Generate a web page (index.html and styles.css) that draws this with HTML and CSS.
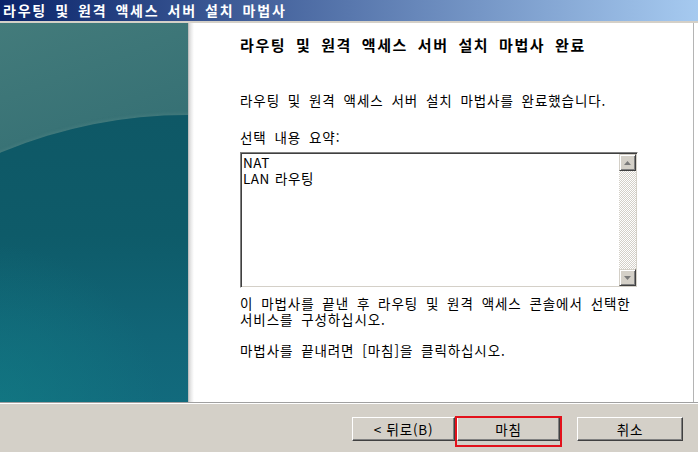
FILE: index.html
```html
<!DOCTYPE html>
<html lang="ko">
<head>
<meta charset="utf-8">
<title>라우팅 및 원격 액세스 서버 설치 마법사</title>
<link rel="stylesheet" href="styles.css">
</head>
<body>
<div class="window">
  <div class="titlebar">라우팅 및 원격 액세스 서버 설치 마법사</div>
  <div class="main">
    <div class="art"></div>
    <div class="shade"></div>
    <div class="content">
      <h1 class="heading">라우팅 및 원격 액세스 서버 설치 마법사 완료</h1>
      <p class="done">라우팅 및 원격 액세스 서버 설치 마법사를 완료했습니다.</p>
      <p class="label">선택 내용 요약:</p>
      <div class="summary">
        <div class="summary-text"><div class="item">NAT</div><div class="item">LAN 라우팅</div></div>
        <div class="scrollbar">
          <div class="sbtn"><svg width="7" height="4" viewBox="0 0 7 4"><path d="M3.5 0L7 4H0z" fill="#7a7a7a"/></svg></div>
          <div class="track"></div>
          <div class="sbtn"><svg width="7" height="4" viewBox="0 0 7 4"><path d="M0 0H7L3.5 4z" fill="#7a7a7a"/></svg></div>
        </div>
      </div>
      <p class="note">이 마법사를 끝낸 후 라우팅 및 원격 액세스 콘솔에서 선택한<br>서비스를 구성하십시오.</p>
      <p class="finish">마법사를 끝내려면 [마침]을 클릭하십시오.</p>
    </div>
    <div class="edge"></div>
  </div>
  <div class="footer">
    <button class="btn back">&lt; 뒤로(B)</button>
    <button class="btn default">마침</button>
    <button class="btn cancel">취소</button>
  </div>
</div>
</body>
</html>
```

FILE: styles.css
```css
* { box-sizing: border-box; }
html, body { margin: 0; padding: 0; }
body {
  background: #d4d0c8;
  font-family: "Noto Sans CJK KR", "Noto Sans", sans-serif;
  color: #000;
}
.window {
  width: 698px;
  height: 452px;
  overflow: hidden;
  display: flex;
  flex-direction: column;
}
.titlebar {
  height: 23px;
  line-height: 21px;
  padding-left: 3px;
  color: #fff;
  font-weight: bold;
  font-size: 14px;
  letter-spacing: 1.8px;
  word-spacing: 2.4px;
  background: linear-gradient(to right, #0a246a, #a6caf0) 0 0 / 100% 21px no-repeat, #d4d0c8;
  white-space: nowrap;
}
.main {
  height: 379px;
  display: flex;
  background: #fff;
}
.art {
  width: 188px;
  position: relative;
  overflow: hidden;
  background: linear-gradient(160deg, #437b7b 0%, #336e73 45%, #26666f 100%);
}
.art::before {
  content: "";
  position: absolute;
  left: -296px;
  top: 92px;
  width: 968px;
  height: 968px;
  border-radius: 50%;
  background:
    radial-gradient(circle 170px at 290px 300px, rgba(18, 128, 134, 0.55), rgba(18, 128, 134, 0) 100%),
    linear-gradient(to bottom, #0e5866 0, #0e5b69 120px, #116577 220px, #126b7e 300px);
  box-shadow: 0 -2px 3px rgba(90, 140, 140, 0.3);
}
.shade {
  width: 6px;
  background: linear-gradient(to right, #a8a8a8 0, #d4d4d4 1px, #e9e9e9 3px, #fff 6px);
}
.content {
  flex: 1;
  padding-left: 46px;
  font-size: 13.5px;
  line-height: 16px;
  letter-spacing: 0.9px;
  word-spacing: 3.2px;
  white-space: nowrap;
}
.edge {
  width: 5px;
  border-left: 1px solid #b4b4b4;
  background: #fff;
}
.heading {
  margin: 14px 0 0;
  font-size: 15px;
  line-height: 16px;
  font-weight: bold;
  letter-spacing: 1.6px;
  word-spacing: 4px;
}
.done { margin: 39px 0 0; }
.label { margin: 21px 0 0; }
.summary {
  margin-top: 7px;
  width: 398px;
  height: 136px;
  display: flex;
  padding: 1px;
  border: 1px solid;
  border-color: #808080 #fff #fff #808080;
  box-shadow: inset 1px 1px 0 #404040, inset -1px -1px 0 #d4d0c8;
  white-space: normal;
}
.summary-text {
  flex: 1;
  padding-left: 1px;
  font-size: 13.5px;
  letter-spacing: 0.5px;
  word-spacing: 1px;
}
.item {
  height: 16px;
  line-height: 16px;
}
.scrollbar {
  width: 17px;
  display: flex;
  flex-direction: column;
}
.sbtn {
  height: 17px;
  display: flex;
  align-items: center;
  justify-content: center;
  background: #d4d0c8;
  border: 1px solid;
  border-color: #d4d0c8 #404040 #404040 #d4d0c8;
  box-shadow: inset 1px 1px 0 #fff, inset -1px -1px 0 #808080;
}
.track {
  flex: 1;
  background: repeating-conic-gradient(#d4d0c8 0 25%, #fff 0 50%) 0 0 / 2px 2px;
}
.note { margin: 7px 0 0; }
.finish { margin: 15px 0 0; }
.footer {
  flex: 1;
  display: flex;
  align-items: flex-start;
  padding: 14px 0 0 352px;
  border-top: 1px solid #a0a0a0;
  box-shadow: inset 0 1px 0 #fff;
  background: #d4d0c8;
}
.btn {
  height: 24px;
  width: 103px;
  padding: 0;
  margin: 0;
  font-family: "Noto Sans CJK KR", "Noto Sans", sans-serif;
  font-size: 13.5px;
  letter-spacing: 0.8px;
  color: #000;
  background: #d4d0c8;
  border: 1px solid;
  border-color: #fff #404040 #404040 #fff;
  box-shadow: inset -1px -1px 0 #808080;
}
.default {
  margin-left: 2px;
  position: relative;
}
.default::after {
  content: "";
  position: absolute;
  left: -3px;
  right: -3px;
  top: -2px;
  bottom: -7px;
  border: 2px solid #e3111b;
}
.cancel {
  margin-left: 17px;
  width: 106px;
}
```
